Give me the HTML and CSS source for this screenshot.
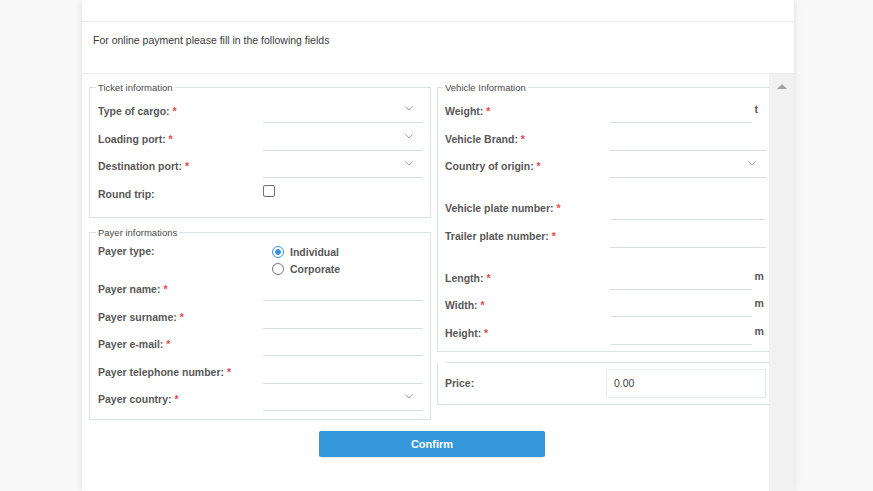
FILE: index.html
```html
<!DOCTYPE html>
<html lang="en">
<head>
<meta charset="utf-8">
<title>Online payment</title>
<link rel="stylesheet" href="styles.css">
</head>
<body>
<div class="modal">
  <div class="modal-header"></div>
  <div class="intro">For online payment please fill in the following fields</div>
  <div class="modal-body">
    <div class="content">
      <div class="columns">
        <div class="col col-left">
          <fieldset class="group ticket">
            <legend>Ticket information</legend>
            <div class="row"><label class="lbl">Type of cargo: <span class="req">*</span></label><div class="field select"><svg class="chev" width="8" height="5" viewBox="0 0 8 5"><path d="M0.5 0.5 L4 4 L7.5 0.5" fill="none" stroke="#a9a9a9" stroke-width="1"/></svg></div></div>
            <div class="row"><label class="lbl">Loading port: <span class="req">*</span></label><div class="field select"><svg class="chev" width="8" height="5" viewBox="0 0 8 5"><path d="M0.5 0.5 L4 4 L7.5 0.5" fill="none" stroke="#a9a9a9" stroke-width="1"/></svg></div></div>
            <div class="row"><label class="lbl">Destination port: <span class="req">*</span></label><div class="field select"><svg class="chev" width="8" height="5" viewBox="0 0 8 5"><path d="M0.5 0.5 L4 4 L7.5 0.5" fill="none" stroke="#a9a9a9" stroke-width="1"/></svg></div></div>
            <div class="row row-check"><label class="lbl">Round trip:</label><div class="field plain"><input type="checkbox" class="check"></div></div>
          </fieldset>
          <fieldset class="group payer">
            <legend>Payer informations</legend>
            <div class="row row-radio"><label class="lbl">Payer type:</label>
              <div class="radios">
                <label class="radio-opt"><input type="radio" name="ptype" checked><span>Individual</span></label>
                <label class="radio-opt"><input type="radio" name="ptype"><span>Corporate</span></label>
              </div>
            </div>
            <div class="row"><label class="lbl">Payer name: <span class="req">*</span></label><div class="field"></div></div>
            <div class="row"><label class="lbl">Payer surname: <span class="req">*</span></label><div class="field"></div></div>
            <div class="row"><label class="lbl">Payer e-mail: <span class="req">*</span></label><div class="field"></div></div>
            <div class="row"><label class="lbl">Payer telephone number: <span class="req">*</span></label><div class="field"></div></div>
            <div class="row"><label class="lbl">Payer country: <span class="req">*</span></label><div class="field select"><svg class="chev" width="8" height="5" viewBox="0 0 8 5"><path d="M0.5 0.5 L4 4 L7.5 0.5" fill="none" stroke="#a9a9a9" stroke-width="1"/></svg></div></div>
          </fieldset>
        </div>
        <div class="col col-right">
          <fieldset class="group vehicle">
            <legend>Vehicle Information</legend>
            <div class="row"><label class="lbl">Weight: <span class="req">*</span></label><div class="field short"></div><span class="unit">t</span></div>
            <div class="row"><label class="lbl">Vehicle Brand: <span class="req">*</span></label><div class="field"></div></div>
            <div class="row"><label class="lbl">Country of origin: <span class="req">*</span></label><div class="field select"><svg class="chev" width="8" height="5" viewBox="0 0 8 5"><path d="M0.5 0.5 L4 4 L7.5 0.5" fill="none" stroke="#a9a9a9" stroke-width="1"/></svg></div></div>
            <div class="row spaced"><label class="lbl">Vehicle plate number: <span class="req">*</span></label><div class="field"></div></div>
            <div class="row"><label class="lbl">Trailer plate number: <span class="req">*</span></label><div class="field"></div></div>
            <div class="row spaced"><label class="lbl">Length: <span class="req">*</span></label><div class="field short"></div><span class="unit">m</span></div>
            <div class="row"><label class="lbl">Width: <span class="req">*</span></label><div class="field short"></div><span class="unit">m</span></div>
            <div class="row"><label class="lbl">Height: <span class="req">*</span></label><div class="field short"></div><span class="unit">m</span></div>
          </fieldset>
          <fieldset class="group price">
            <legend></legend>
            <div class="price-row"><label class="lbl price-lbl">Price:</label><input class="price-input" value="0.00" readonly></div>
          </fieldset>
        </div>
      </div>
      <div class="actions"><button class="btn-confirm" type="button">Confirm</button></div>
    </div>
    <div class="scrollbar"><span class="arrow-up"></span></div>
  </div>
</div>
</body>
</html>
```

FILE: styles.css
```css
html, body {
  height: 100%;
}

body {
  margin: 0;
  background: #f9f9f9;
  font-family: "Liberation Sans", Arial, sans-serif;
  overflow: hidden;
}

.modal {
  margin-left: 82px;
  width: 712px;
  height: 491px;
  background: #fff;
  box-shadow: 0 0 7px rgba(0, 0, 0, 0.12);
  display: flex;
  flex-direction: column;
}

.modal-header {
  flex: none;
  height: 21px;
  border-bottom: 1px solid #eaeeee;
}

.intro {
  flex: none;
  box-sizing: border-box;
  height: 52px;
  padding: 11.5px 0 0 11px;
  font-size: 10.5px;
  line-height: 13px;
  color: #3a3a3a;
  border-bottom: 1px solid #e8ecec;
}

.modal-body {
  flex: 1;
  display: flex;
  min-height: 0;
}

.content {
  flex: 1;
  min-width: 0;
  overflow: hidden;
  padding: 7.5px 0 0 7px;
}

.scrollbar {
  flex: none;
  width: 25px;
  box-sizing: border-box;
  padding-top: 10px;
  background: #f1f1f1;
  display: flex;
  justify-content: center;
  align-items: flex-start;
}

.arrow-up {
  width: 0;
  height: 0;
  border-left: 5.5px solid transparent;
  border-right: 5.5px solid transparent;
  border-bottom: 5px solid #a3a3a3;
}

.columns {
  display: flex;
  gap: 6px;
  align-items: flex-start;
}

.col {
  flex: none;
  display: flex;
  flex-direction: column;
}

.col-left {
  width: 342px;
  gap: 8.5px;
}

.col-right {
  width: 338px;
  gap: 10px;
}

.group {
  margin: 0;
  min-width: 0;
  border: 1px solid #dde3e3;
}

.group legend {
  font-size: 9.5px;
  line-height: 11px;
  color: #4a4a4a;
  padding: 0 2px;
  margin-left: -2px;
}

.ticket {
  padding: 7.5px 7px 11.5px 8px;
}

.payer {
  padding: 5.5px 7px 8px 8px;
}

.vehicle {
  padding: 7.5px 8px 6px 7px;
}

.price {
  padding: 6px 8px 6px 7px;
}

.price legend {
  padding: 0;
  margin-left: -8px;
  width: 9px;
  height: 1px;
}

.row {
  display: flex;
  align-items: center;
  height: 23px;
}

.row + .row {
  margin-top: 4.5px;
}

.row.spaced {
  margin-top: 19px;
}

.lbl {
  flex: none;
  width: 165px;
  font-size: 10.5px;
  line-height: 13px;
  font-weight: bold;
  color: #585858;
}

.req {
  color: #e8454a;
}

.field {
  flex: none;
  box-sizing: border-box;
  width: 160px;
  height: 23px;
  border-bottom: 1px solid #d9dfdf;
}

.vehicle .field {
  width: 156px;
}

.vehicle .field.short {
  width: 142px;
}

.field.select {
  display: flex;
  justify-content: flex-end;
  align-items: flex-start;
  padding: 6px 10px 0 0;
}

.chev {
  display: block;
}

.field.plain {
  border-bottom: none;
}

.row-check .field {
  align-self: stretch;
}

.check {
  appearance: none;
  display: block;
  box-sizing: border-box;
  width: 12px;
  height: 12px;
  margin: 2.5px 0 0 0;
  border: 1px solid #6f6f6f;
  border-radius: 2px;
  background: #fff;
}

.unit {
  align-self: flex-start;
  margin: 3px 0 0 2.5px;
  font-size: 10.5px;
  line-height: 13px;
  font-weight: bold;
  color: #585858;
}

.row-radio {
  height: auto;
  align-items: flex-start;
}

.row-radio .lbl {
  line-height: 17px;
}

.row.row-radio + .row {
  margin-top: 1px;
}

.radios {
  display: flex;
  flex-direction: column;
  padding-left: 9px;
}

.radio-opt {
  display: flex;
  align-items: center;
  gap: 6px;
  height: 17px;
  font-size: 10.5px;
  font-weight: bold;
  color: #585858;
}

.radio-opt input {
  appearance: none;
  box-sizing: border-box;
  width: 12px;
  height: 12px;
  margin: 0;
  border: 1px solid #777;
  border-radius: 50%;
  background: #fff;
}

.radio-opt input:checked {
  border-color: #3a93d8;
  background: radial-gradient(circle, #3a93d8 0 2.6px, #fff 3.1px);
}

.price-row {
  display: flex;
  align-items: center;
}

.price-lbl {
  width: 161px;
}

.price-input {
  box-sizing: border-box;
  width: 162px;
  height: 29px;
  margin: 0;
  padding: 0 0 0 7px;
  border: 1px solid #e6ebeb;
  outline: none;
  font-family: "Liberation Sans", Arial, sans-serif;
  font-size: 10.5px;
  color: #444;
  background: #fff;
}

.actions {
  width: 686px;
  display: flex;
  justify-content: center;
  margin-top: 11px;
}

.btn-confirm {
  width: 226px;
  height: 26px;
  border: none;
  border-radius: 2px;
  background: #3498db;
  color: #fff;
  font-family: "Liberation Sans", Arial, sans-serif;
  font-size: 11px;
  font-weight: bold;
  box-shadow: 0 1px 1px rgba(0, 0, 0, 0.08);
}
```
